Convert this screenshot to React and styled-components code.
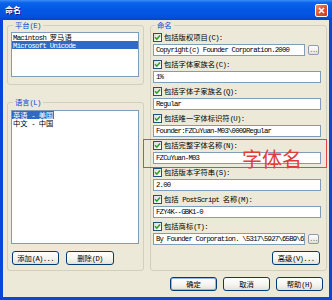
import React from "react";
import styled, { createGlobalStyle, css } from "styled-components";

const Global = createGlobalStyle`
  html, body { margin: 0; padding: 0; background: #ECE9D8; }
  body { font-family: "Noto Sans CJK SC", sans-serif; font-size: 7.3px; color: #000; }
  * { box-sizing: border-box; }
`;

const Window = styled.div`
  width: 332px;
  height: 300px;
  display: flex;
  flex-direction: column;
  background: #0842D6;
  overflow: hidden;
`;

const TitleBar = styled.div`
  height: 20px;
  flex: none;
  display: flex;
  align-items: center;
  justify-content: space-between;
  padding: 0 4px 0 5px;
  background: linear-gradient(#3D8EF8 0%, #0A63EB 14%, #0358E6 45%, #0453E0 80%, #0344CB 100%);
`;

const Title = styled.span`
  color: #fff;
  font-weight: bold;
  font-size: 8px;
  line-height: 10px;
  text-shadow: 1px 1px 0 #0A1883;
`;

const CloseBtn = styled.div`
  width: 13px;
  height: 13px;
  border: 1px solid #fff;
  border-radius: 2px;
  background: linear-gradient(135deg, #F09070 0%, #E2552F 45%, #C7421E 100%);
  display: flex;
  align-items: center;
  justify-content: center;
`;

const Body = styled.div`
  position: relative;
  flex: 1;
  background: #ECE9D8;
  border: 3px solid #0A46D8;
  border-top: 0;
  padding: 0 2px 0 4px;
  display: flex;
  flex-direction: column;
`;

const MainRow = styled.div`
  display: flex;
  gap: 6px;
`;

const LeftCol = styled.div`
  width: 137px;
  display: flex;
  flex-direction: column;
`;

const Group = styled.fieldset`
  margin: 0;
  min-width: 0;
  border: 1px solid #D0D0BF;
  border-radius: 3px;
  padding: ${(p) => p.$pad};
  ${(p) => p.$mt && css`margin-top: ${p.$mt}px;`}
  display: flex;
  flex-direction: column;
  ${(p) => p.$w && css`width: ${p.$w}px;`}
  ${(p) => p.$grow && css`flex: 1;`}
`;

const Legend = styled.legend`
  padding: 0 2px;
  margin-left: ${(p) => p.$ml || 2}px;
  font-size: 7.3px;
  line-height: 10px;
  height: 10px;
  color: #0046D5;
`;

const Lat = styled.span`
  font-family: "Liberation Mono", monospace;
  letter-spacing: -0.7px;
`;

const mixed = (s) =>
  s
    .split(/([\x20-\x7e]+)/)
    .filter(Boolean)
    .map((p, i) =>
      /^[\x20-\x7e]+$/.test(p) ? <Lat key={i}>{p}</Lat> : <React.Fragment key={i}>{p}</React.Fragment>
    );

const ListBox = styled.div`
  height: ${(p) => p.$h}px;
  background: #fff;
  border: 1px solid #7F9DB9;
  overflow: hidden;
`;

const ListItem = styled.div`
  height: 8px;
  line-height: 8px;
  padding-left: 1px;
  white-space: nowrap;
  ${(p) => p.$fit && css`width: fit-content; padding-right: 1px;`}
  ${(p) =>
    p.$selected &&
    css`
      background: #316AC5;
      color: #fff;
    `}
`;

const BtnRow = styled.div`
  display: flex;
  gap: ${(p) => p.$gap || 7}px;
  margin-top: ${(p) => p.$mt || 0}px;
  ${(p) => p.$end && css`justify-content: flex-end;`}
  padding-left: ${(p) => p.$pl || 0}px;
  padding-right: ${(p) => p.$pr || 0}px;
`;

const Btn = styled.button`
  width: ${(p) => p.$w || 47}px;
  height: 14px;
  padding: 0;
  margin: 0;
  flex: none;
  border: 1px solid #003C74;
  border-radius: 3px;
  background: linear-gradient(#FFFFFF 0%, #F5F4EF 55%, #E4E1D6 100%);
  font-family: "Noto Sans CJK SC", sans-serif;
  font-size: 7.3px;
  line-height: 12px;
  color: #000;
  ${(p) => p.$default && css`box-shadow: inset 0 0 0 1px #97B5E6;`}
`;

const Fields = styled.div`
  display: flex;
  flex-direction: column;
  gap: 1px;
`;

const LabelRow = styled.div`
  height: 14px;
  display: flex;
  align-items: center;
  gap: 2px;
  white-space: nowrap;
`;

const Check = styled.span`
  width: 9px;
  height: 9px;
  flex: none;
  border: 1px solid #1C5180;
  background: linear-gradient(135deg, #DCDCD7, #FFFFFF);
  display: flex;
  align-items: center;
  justify-content: center;
`;

const InputRow = styled.div`
  display: flex;
  align-items: center;
  gap: 3px;
`;

const TextBox = styled.div`
  flex: 1;
  min-width: 0;
  height: 12px;
  border: 1px solid #7F9DB9;
  background: #fff;
  padding: 0 1px 0 2px;
  line-height: 10px;
  white-space: pre;
  overflow: hidden;
  font-family: "Liberation Mono", monospace;
  letter-spacing: -0.78px;
`;

const MoreBtn = styled.div`
  width: 11px;
  height: 10px;
  flex: none;
  margin-right: 2px;
  border: 1px solid #8C9BAE;
  border-radius: 2px;
  background: linear-gradient(#FFFFFF, #E4E1D6);
  font-family: "Liberation Mono", monospace;
  font-size: 6px;
  line-height: 9px;
  letter-spacing: -1px;
  text-align: center;
  color: #333;
`;

const AdvBtn = styled(Btn)`
  align-self: flex-end;
  margin-top: auto;
  margin-right: 1px;
`;

const RedBox = styled.div`
  position: absolute;
  left: 140px;
  top: 119px;
  width: 184px;
  height: 29px;
  border: 1px solid #E04646;
  pointer-events: none;
`;

const RedNote = styled.div`
  position: absolute;
  left: 239px;
  top: 128px;
  font-family: "Noto Sans CJK SC", sans-serif;
  font-size: 20px;
  line-height: 22px;
  color: #E03C3C;
  white-space: nowrap;
`;

const fields = [
  { label: "包括版权项目(C):", value: "Copyright(c) Founder Corporation.2000", more: true },
  { label: "包括字体家族名(C):", value: "1%" },
  { label: "包括字体子家族名(Q):", value: "Regular" },
  { label: "包括唯一字体标识符(U):", value: "Founder:FZCuYuan-M03\\0009Regular" },
  { label: "包括完整字体名称(N):", value: "FZCuYuan-M03" },
  { label: "包括版本字符串(S):", value: "2.00" },
  { label: "包括 PostScript 名称(M):", value: "FZY4K--GBK1-0" },
  { label: "包括商标(T):", value: "By Founder Corporation. \\5317\\5927\\65B9\\6", more: true },
];

const CheckMark = () => (
  <svg width="7" height="7" viewBox="0 0 7 7">
    <polyline points="1,3.3 2.8,5.2 6,1.4" fill="none" stroke="#21A121" strokeWidth="1.5" />
  </svg>
);

export default function App() {
  return (
    <>
      <Global />
      <Window>
        <TitleBar>
          <Title>命名</Title>
          <CloseBtn>
            <svg width="7" height="7" viewBox="0 0 7 7">
              <path d="M1 1L6 6M6 1L1 6" stroke="#fff" strokeWidth="1.6" />
            </svg>
          </CloseBtn>
        </TitleBar>
        <Body>
          <MainRow>
            <LeftCol>
              <Group $pad="2px 4px 7px 3px">
                <Legend>{mixed("平台(E)")}</Legend>
                <ListBox $h={45}>
                  <ListItem>{mixed("Macintosh 罗马语")}</ListItem>
                  <ListItem $selected>{mixed("Microsoft Unicode")}</ListItem>
                </ListBox>
              </Group>
              <Group $pad="3px 4px 5px 3px" $mt={12} $grow>
                <Legend>{mixed("语言(L)")}</Legend>
                <ListBox $h={134}>
                  <ListItem $selected $fit>{mixed("英语 - 美国")}</ListItem>
                  <ListItem>{mixed("中文 - 中国")}</ListItem>
                </ListBox>
                <BtnRow $mt={7} $pl={1}>
                  <Btn $w={47}>{mixed("添加(A)...")}</Btn>
                  <Btn $w={48}>{mixed("删除(D)")}</Btn>
                </BtnRow>
              </Group>
            </LeftCol>
            <Group $pad="0 5px 5px 2px" $w={177}>
              <Legend $ml={2}>命名</Legend>
              <Fields>
                {fields.map((f) => (
                  <div key={f.label}>
                    <LabelRow>
                      <Check>
                        <CheckMark />
                      </Check>
                      <span>{mixed(f.label)}</span>
                    </LabelRow>
                    <InputRow>
                      <TextBox>{f.value}</TextBox>
                      {f.more && <MoreBtn>...</MoreBtn>}
                    </InputRow>
                  </div>
                ))}
              </Fields>
              <AdvBtn $w={48}>{mixed("高级(V)...")}</AdvBtn>
            </Group>
          </MainRow>
          <BtnRow $end $gap={6} $mt={6} $pr={4}>
            <Btn $default>确定</Btn>
            <Btn>取消</Btn>
            <Btn>{mixed("帮助(H)")}</Btn>
          </BtnRow>
          <RedBox />
          <RedNote>字体名</RedNote>
        </Body>
      </Window>
    </>
  );
}
